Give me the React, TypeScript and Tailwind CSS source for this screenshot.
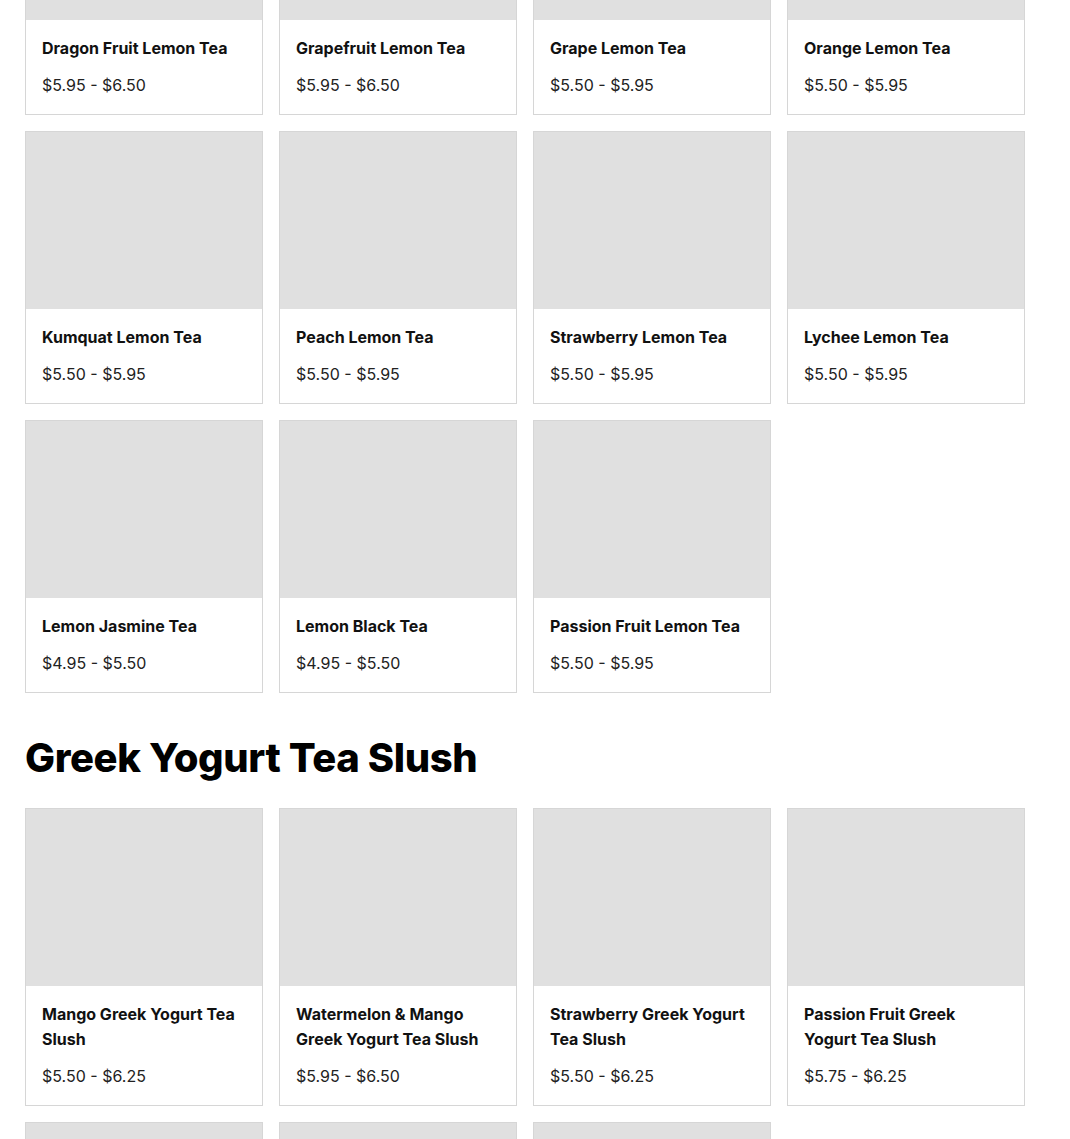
import React from 'react';

interface Drink {
    name: string;
    price: string;
}

const lemonTeas: Drink[] = [
    { name: 'Dragon Fruit Lemon Tea', price: '$5.95 - $6.50' },
    { name: 'Grapefruit Lemon Tea', price: '$5.95 - $6.50' },
    { name: 'Grape Lemon Tea', price: '$5.50 - $5.95' },
    { name: 'Orange Lemon Tea', price: '$5.50 - $5.95' },
    { name: 'Kumquat Lemon Tea', price: '$5.50 - $5.95' },
    { name: 'Peach Lemon Tea', price: '$5.50 - $5.95' },
    { name: 'Strawberry Lemon Tea', price: '$5.50 - $5.95' },
    { name: 'Lychee Lemon Tea', price: '$5.50 - $5.95' },
    { name: 'Lemon Jasmine Tea', price: '$4.95 - $5.50' },
    { name: 'Lemon Black Tea', price: '$4.95 - $5.50' },
    { name: 'Passion Fruit Lemon Tea', price: '$5.50 - $5.95' },
];

const yogurtSlush: Drink[] = [
    { name: 'Mango Greek Yogurt Tea Slush', price: '$5.50 - $6.25' },
    { name: 'Watermelon & Mango Greek Yogurt Tea Slush', price: '$5.95 - $6.50' },
    { name: 'Strawberry Greek Yogurt Tea Slush', price: '$5.50 - $6.25' },
    { name: 'Passion Fruit Greek Yogurt Tea Slush', price: '$5.75 - $6.25' },
    { name: 'Peach Greek Yogurt Tea Slush', price: '$5.50 - $6.25' },
    { name: 'Grape Greek Yogurt Tea Slush', price: '$5.50 - $6.25' },
    { name: 'Lychee Greek Yogurt Tea Slush', price: '$5.50 - $6.25' },
];

const DrinkCard: React.FC<{ drink: Drink }> = ({ drink }) => (
    <div className="border border-[#d6d6d6] bg-white flex flex-col">
        <div className="h-[177px] bg-[#e0e0e0]" />
        <div className="px-4 pt-4 pb-[17px]">
            <h3 className="text-[16px] leading-[25px] font-bold text-[#111]">{drink.name}</h3>
            <p className="mt-3 text-[16px] leading-6 text-[#222]">{drink.price}</p>
        </div>
    </div>
);

const DrinkGrid: React.FC<{ items: Drink[] }> = ({ items }) => (
    <div className="grid grid-cols-4 gap-4 items-start">
        {items.map(d => <DrinkCard key={d.name} drink={d} />)}
    </div>
);

export default function App() {
    return (
        <div className="bg-white font-['Inter',sans-serif] overflow-hidden h-[1139px]">
            <div className="w-[1000px] ml-[25px] mt-[-158px]">
                <DrinkGrid items={lemonTeas} />
                <h2 className="mt-[41px] mb-[26px] text-[40px] leading-[48px] font-extrabold text-black tracking-[-0.4px]">Greek Yogurt Tea Slush</h2>
                <DrinkGrid items={yogurtSlush} />
            </div>
        </div>
    );
}
